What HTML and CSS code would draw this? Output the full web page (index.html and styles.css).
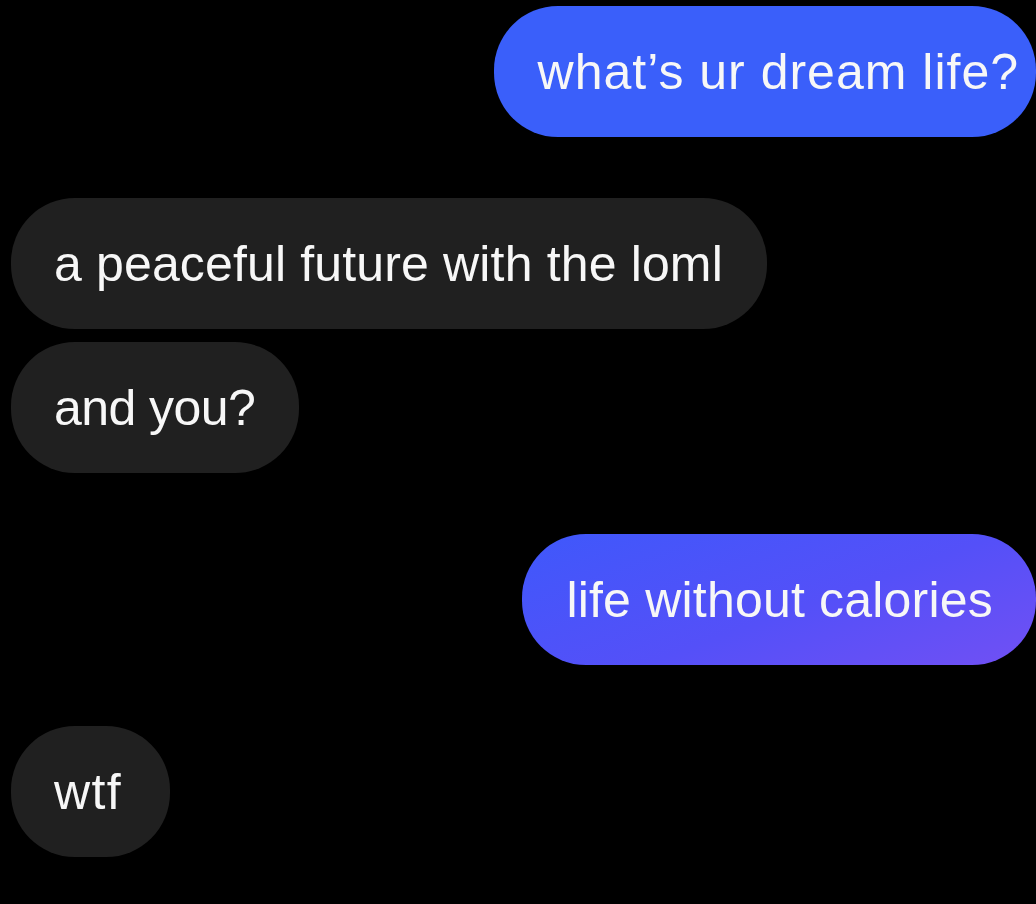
FILE: index.html
```html
<!DOCTYPE html>
<html lang="en">
<head>
<meta charset="utf-8">
<title>Chat</title>
<link rel="stylesheet" href="styles.css">
</head>
<body>
<main class="chat">
  <div class="group group-out">
    <div class="bubble out out-first">what’s ur dream life?</div>
  </div>
  <div class="group group-in">
    <div class="bubble in in-long">a peaceful future with the loml</div>
    <div class="bubble in in-mid">and you?</div>
  </div>
  <div class="group group-out">
    <div class="bubble out out-grad">life without calories</div>
  </div>
  <div class="group group-in">
    <div class="bubble in in-short">wtf</div>
  </div>
</main>
</body>
</html>
```
FILE: styles.css
```css
html, body {
  margin: 0;
  padding: 0;
  background: #000;
  overflow: hidden;
}
body {
  width: 1036px;
  height: 904px;
  font-family: "Liberation Sans", Arial, sans-serif;
}
.chat {
  display: flex;
  flex-direction: column;
  gap: 61px;
  padding: 6px 0 0 11px;
}
.group {
  display: flex;
  flex-direction: column;
  gap: 13px;
}
.group-out {
  align-items: flex-end;
}
.group-in {
  align-items: flex-start;
}
.bubble {
  box-sizing: border-box;
  height: 131px;
  padding: 36px 44px 34px 43px;
  line-height: 61px;
  font-size: 50px;
  color: #f7f7f7;
  border-radius: 64px;
  white-space: nowrap;
}
.in {
  background: #202020;
}
.in-long {
  letter-spacing: 0.15px;
}
.in-mid {
  letter-spacing: -0.55px;
}
.in-short {
  letter-spacing: 1.4px;
  padding-right: 48px;
}
.out {
  background: #3a5ffa;
}
.out-first {
  padding-left: 44px;
  padding-right: 17px;
  letter-spacing: 1px;
}
.out-grad {
  padding-left: 44px;
  padding-right: 43px;
  letter-spacing: 0.2px;
  background: linear-gradient(160deg, #3f58fb 0%, #5450f8 55%, #7150f4 100%);
}
```
